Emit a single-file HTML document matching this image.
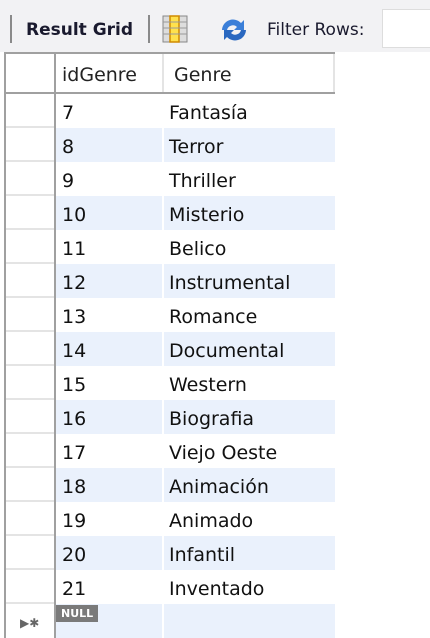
<!DOCTYPE html>
<html><head><style>
body{margin:0;width:430px;height:638px;overflow:hidden;background:#fff;font-family:Tahoma,"DejaVu Sans","Liberation Sans",sans-serif;position:relative}
.tb{position:absolute;left:0;top:0;width:430px;height:52px;background:#f2f2f4}
.t{position:absolute;font-size:17px;color:#1a1a2e}
.grid{position:absolute;left:4px;top:52px}
.r{position:absolute;left:0;height:34px;font-size:19px;color:#111}
.rh{position:absolute;left:2px;width:48px;height:32px;border-bottom:2px solid #e4e4e4;background:#fff}
.c1{position:absolute;left:52px;width:106px;height:34px;padding-left:6px;box-sizing:border-box;line-height:38px}
.c2{position:absolute;left:160px;width:171px;height:34px;padding-left:5px;box-sizing:border-box;line-height:38px}
.b .c1,.b .c2{background:#eaf1fc}
</style></head><body>
<div class="tb">
<div style="position:absolute;left:10px;top:15px;width:2px;height:28px;background:#8a8a8a"></div>
<div class="t" style="left:26px;top:20px;font-weight:bold">Result Grid</div>
<div style="position:absolute;left:148px;top:15px;width:2px;height:28px;background:#8a8a8a"></div>
<svg style="position:absolute;left:162px;top:15px" width="26" height="28" viewBox="0 0 26 28"><rect x="1" y="1" width="24" height="26" fill="#ddd" stroke="#888"/><rect x="8" y="1" width="9" height="26" fill="#ffe14d" stroke="#d08a00" stroke-width="1.5"/><path d="M1 7H25M1 13H25M1 19H25" stroke="#999"/></svg>
<svg style="position:absolute;left:218px;top:16px" width="32" height="28" viewBox="0 0 32 28"><path d="M4 14a11 11 0 0 1 19-7l3-3v10h-10l3-3a6 6 0 0 0-10 3z" fill="#3b7fd8"/><path d="M28 14a11 11 0 0 1-19 7l-3 3V14h10l-3 3a6 6 0 0 0 10-3z" fill="#2a68c0"/></svg>
<div class="t" style="left:267px;top:20px">Filter Rows:</div>
<div style="position:absolute;left:382px;top:9px;width:48px;height:37px;background:#fff;border:1px solid #ddd;border-right:none"></div>
</div>
<div class="grid">
<div style="position:absolute;left:0;top:0;width:2px;height:586px;background:#a0a0a0"></div>
<div style="position:absolute;left:0;top:0;width:331px;height:2px;background:#a0a0a0"></div>
<div style="position:absolute;left:50px;top:0;width:2px;height:586px;background:#a0a0a0"></div>
<div style="position:absolute;left:0;top:40px;width:331px;height:2px;background:#a0a0a0"></div>
<div style="position:absolute;left:158px;top:2px;width:2px;height:38px;background:#e4e4e4"></div>
<div style="position:absolute;left:329px;top:2px;width:2px;height:38px;background:#e4e4e4"></div>
<div class="r" style="top:4px;left:0;width:331px;height:36px">
<div class="c1" style="left:58px;padding:0;line-height:38px;color:#222">idGenre</div>
<div class="c2" style="left:170px;padding:0;line-height:38px;color:#222">Genre</div>
</div>
</div>
<div style="position:absolute;left:4px;top:94px" id="rows">
<div class="r" style="top:0"><div class="rh"></div><div class="c1">7</div><div class="c2">Fantasía</div></div>
<div class="r b" style="top:34px"><div class="rh"></div><div class="c1">8</div><div class="c2">Terror</div></div>
<div class="r" style="top:68px"><div class="rh"></div><div class="c1">9</div><div class="c2">Thriller</div></div>
<div class="r b" style="top:102px"><div class="rh"></div><div class="c1">10</div><div class="c2">Misterio</div></div>
<div class="r" style="top:136px"><div class="rh"></div><div class="c1">11</div><div class="c2">Belico</div></div>
<div class="r b" style="top:170px"><div class="rh"></div><div class="c1">12</div><div class="c2">Instrumental</div></div>
<div class="r" style="top:204px"><div class="rh"></div><div class="c1">13</div><div class="c2">Romance</div></div>
<div class="r b" style="top:238px"><div class="rh"></div><div class="c1">14</div><div class="c2">Documental</div></div>
<div class="r" style="top:272px"><div class="rh"></div><div class="c1">15</div><div class="c2">Western</div></div>
<div class="r b" style="top:306px"><div class="rh"></div><div class="c1">16</div><div class="c2">Biografia</div></div>
<div class="r" style="top:340px"><div class="rh"></div><div class="c1">17</div><div class="c2">Viejo Oeste</div></div>
<div class="r b" style="top:374px"><div class="rh"></div><div class="c1">18</div><div class="c2">Animación</div></div>
<div class="r" style="top:408px"><div class="rh"></div><div class="c1">19</div><div class="c2">Animado</div></div>
<div class="r b" style="top:442px"><div class="rh"></div><div class="c1">20</div><div class="c2">Infantil</div></div>
<div class="r" style="top:476px"><div class="rh"></div><div class="c1">21</div><div class="c2">Inventado</div></div>
<div class="r b" style="top:510px"><div class="rh" style="border:none"><span style="position:absolute;left:14px;top:12px;font-size:12px;color:#666">▶✱</span></div><div class="c1"><span style="position:absolute;left:0;top:1px;background:#7a7a7a;color:#fff;font-size:11px;font-weight:bold;line-height:17px;padding:0 5px">NULL</span></div><div class="c2"></div></div>
</div>
</body></html>
